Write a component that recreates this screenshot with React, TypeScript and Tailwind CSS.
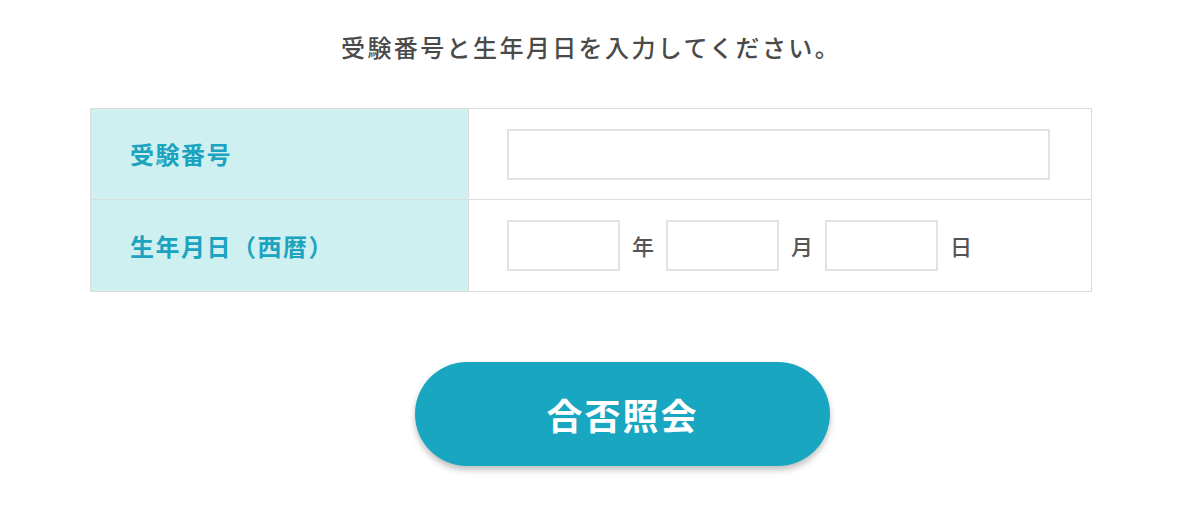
export default function App() {
  const font = { fontFamily: '"Noto Sans CJK JP", "Noto Sans", sans-serif' };
  return (
    <div className="w-[1200px] h-[532px] bg-white text-[#555]" style={font}>
      <p className="pt-[31px] pl-[341px] text-[24px] leading-[32px] tracking-[2.4px] font-medium text-[#4a4a4a]">
        受験番号と生年月日を入力してください。
      </p>

      <div className="ml-[90px] w-[1002px] mt-[45px] border border-[#dcdcdc]">
        <div className="flex h-[91px] border-b border-[#dcdcdc]">
          <div className="w-[378px] shrink-0 flex items-center pl-[39px] bg-[#cef0f1] border-r border-[#dcdcdc] text-[#1ba3bf] font-bold text-[24px] tracking-[1.5px]">
            受験番号
          </div>
          <div className="flex-1 flex items-center pl-[38px]">
            <div className="w-[543px] h-[51px] border-2 border-[#e2e2e2]" />
          </div>
        </div>
        <div className="flex h-[91px]">
          <div className="w-[378px] shrink-0 flex items-center pl-[39px] bg-[#cef0f1] border-r border-[#dcdcdc] text-[#1ba3bf] font-bold text-[24px] tracking-[1.5px]">
            生年月日（西暦）
          </div>
          <div className="flex-1 flex items-center pl-[38px] text-[22px] font-medium text-[#555]">
            <div className="w-[113px] h-[51px] border-2 border-[#e2e2e2]" />
            <span className="w-[46px] text-center">年</span>
            <div className="w-[113px] h-[51px] border-2 border-[#e2e2e2]" />
            <span className="w-[46px] text-center">月</span>
            <div className="w-[113px] h-[51px] border-2 border-[#e2e2e2]" />
            <span className="w-[46px] text-center">日</span>
          </div>
        </div>
      </div>

      <div className="pl-[415px] mt-[70px]">
        <button
          type="button"
          className="w-[415px] h-[104px] rounded-full bg-[#19a6c1] text-white font-bold text-[36px] tracking-[2px] shadow-[0_4px_6px_rgba(0,0,0,0.25)]"
        >
          合否照会
        </button>
      </div>
    </div>
  );
}
